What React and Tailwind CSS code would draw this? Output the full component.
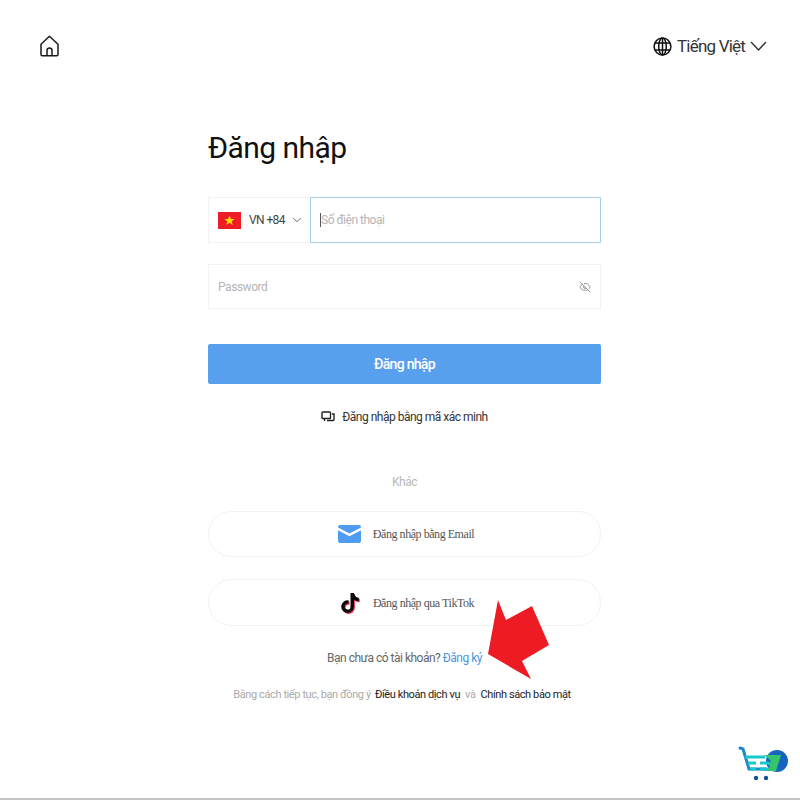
import React from 'react'
import { ChevronDown, EyeOff } from 'lucide-react'
import { FaTiktok } from 'react-icons/fa'

function HomeIcon() {
  return (
    <svg width="19" height="22" viewBox="0 0 19 22" fill="none" stroke="#1a1a1a" strokeWidth="1.5" strokeLinejoin="round" className="shrink-0">
      <path d="M9.5 1.2L1 9.2V19.5a1.3 1.3 0 0 0 1.3 1.3h14.4a1.3 1.3 0 0 0 1.3-1.3V9.2z" />
      <path d="M7 20.8v-5.3a2.5 2.5 0 0 1 5 0v5.3" />
    </svg>
  )
}

function GlobeIcon() {
  return (
    <svg width="19" height="19" viewBox="0 0 19 19" fill="none" stroke="#111" strokeWidth="1.5" className="shrink-0">
      <circle cx="9.5" cy="9.5" r="8.4" />
      <ellipse cx="9.5" cy="9.5" rx="3.8" ry="8.4" />
      <path d="M9.5 1v17M2 6h15M2 13h15" />
    </svg>
  )
}

function WideChevron() {
  return (
    <svg width="17" height="10" viewBox="0 0 17 10" fill="none" stroke="#333" strokeWidth="1.4" className="shrink-0">
      <path d="M1 1l7.5 8L16 1" />
    </svg>
  )
}

function VnFlag() {
  return (
    <svg width="23" height="17" viewBox="0 0 23 17" className="shrink-0">
      <rect width="23" height="17" fill="#ee1c25" />
      <polygon points="11.5,3.5 12.9,7 16.6,7 13.7,9.3 14.7,13 11.5,10.8 8.3,13 9.3,9.3 6.4,7 10.1,7" fill="#ffe000" />
    </svg>
  )
}

function CodeIcon() {
  return (
    <svg width="14" height="12" viewBox="0 0 14 12" fill="none" stroke="#222" strokeWidth="1.4" className="shrink-0">
      <rect x="1" y="1" width="8.5" height="6.5" rx="0.8" />
      <path d="M11 3h2v5.5a1 1 0 0 1-1 1H6" />
      <path d="M3.5 7.5v2.5" />
    </svg>
  )
}

function MailIcon() {
  return (
    <svg width="23" height="18" viewBox="0 0 23 18" className="shrink-0">
      <path d="M2 0h19a2 2 0 0 1 2 2v.6L11.5 8.6 0 2.6V2a2 2 0 0 1 2-2z" fill="#4d9cf0" />
      <path d="M0 5.2l11.5 6 11.5-6V16a2 2 0 0 1-2 2H2a2 2 0 0 1-2-2z" fill="#4d9cf0" />
    </svg>
  )
}

function CartLogo() {
  return (
    <svg width="50" height="36" viewBox="0 0 50 36" className="absolute left-[738px] top-[746px]">
      <circle cx="39" cy="15" r="11" fill="#1565c0" />
      <path d="M26 9h17l-5 16H26l6-4-2-3 3-3-3-3z" fill="#35c46b" />
      <path d="M2 2l3 1 6 20h17" fill="none" stroke="#1e88c9" strokeWidth="3" strokeLinecap="round" />
      <path d="M7 11h20M10 17h8M22 17h9M12 23h6M22 23h8" fill="none" stroke="#19c7d0" strokeWidth="3" />
      <circle cx="18" cy="32" r="2.2" fill="#14508f" />
      <circle cx="28" cy="32" r="2.2" fill="#14508f" />
    </svg>
  )
}

function RedArrow() {
  return (
    <svg width="64" height="82" viewBox="0 0 64 82" className="absolute left-[487px] top-[599px]">
      <polygon points="11,1 19,21 45,7 62,46 35,62 44,80 1,55" fill="#ed1c24" />
    </svg>
  )
}

export default function App() {
  return (
    <div className="relative w-[800px] h-[800px] overflow-hidden bg-white font-['Roboto',sans-serif] border-b-2 border-[#c4c4c4]">
      {/* Header */}
      <header className="flex items-start justify-between pt-[35px] pl-[40px] pr-[33px] h-[128px]">
        <HomeIcon />
        <div className="flex items-center text-[#333]">
          <GlobeIcon />
          <span className="ml-[5px] text-[17px] leading-[22px] tracking-[-0.8px]">Tiếng Việt</span>
          <span className="ml-[5px]"><WideChevron /></span>
        </div>
      </header>

      {/* Form */}
      <main className="ml-[208px] w-[393px] flex flex-col">
        <h1 className="text-[30px] leading-[40px] font-normal tracking-[-0.55px] text-[#111]">Đăng nhập</h1>

        <div className="mt-[29px] flex h-[46px]">
          <div className="w-[102px] flex items-center pl-[9px] border border-[#f2f2f2] border-r-0">
            <VnFlag />
            <span className="ml-[8px] text-[12px] tracking-[-0.6px] text-[#444]">VN +84</span>
            <ChevronDown size={14} strokeWidth={1.5} className="ml-[5px] text-[#555]" />
          </div>
          <div className="flex-1 flex items-center pl-[9px] border border-[#a5cdea] rounded-[1px]">
            <span className="w-px h-[14px] bg-[#555]"></span>
            <span className="text-[12px] tracking-[-0.5px] text-[#b5b5b5]">Số điện thoại</span>
          </div>
        </div>

        <div className="mt-[21px] h-[45px] flex items-center justify-between pl-[9px] pr-[9px] border border-[#f2f2f2]">
          <span className="text-[12px] tracking-[-0.45px] text-[#b5b5b5]">Password</span>
          <EyeOff size={12} className="text-[#999]" />
        </div>

        <button className="mt-[35px] h-[40px] bg-[#589fee] rounded-[2px] text-white text-[14px] font-medium tracking-[-0.7px]">Đăng nhập</button>

        <div className="mt-[23px] flex items-center justify-center gap-[7px] h-[20px] text-[12px] tracking-[-0.5px] text-[#333]">
          <CodeIcon />
          <span>Đăng nhập bằng mã xác minh</span>
        </div>

        <p className="mt-[47px] text-center text-[12px] leading-[16px] tracking-[-0.5px] text-[#b8b8b8]">Khác</p>

        <div className="mt-[21px] h-[46px] flex items-center justify-center gap-[12px] pl-[3px] border border-[#f2f2f2] rounded-full font-['Liberation_Serif',serif] text-[12px] tracking-[-0.45px] text-[#555]">
          <MailIcon />
          <span>Đăng nhập bằng Email</span>
        </div>

        <div className="mt-[22px] h-[47px] flex items-center justify-center gap-[13px] pl-[5px] border border-[#f2f2f2] rounded-full font-['Liberation_Serif',serif] text-[12px] tracking-[-0.45px] text-[#555]">
          <FaTiktok size={20} className="text-[#0a0a0a] drop-shadow-[1px_1px_0_#f0355c]" />
          <span>Đăng nhập qua TikTok</span>
        </div>

        <p className="mt-[24px] text-center text-[12px] leading-[16px] tracking-[-0.5px] text-[#666]">
          Bạn chưa có tài khoản? <span className="text-[#4d94e0]">Đăng ký</span>
        </p>

        <p className="mt-[21px] pr-[5px] text-center text-[11px] leading-[16px] tracking-[-0.4px] text-[#aaa] whitespace-nowrap">
          Bằng cách tiếp tục, bạn đồng ý <span className="ml-[2px] text-[#222]">Điều khoản dịch vụ</span>
          <span className="mx-[5px]">và</span>
          <span className="text-[#222]">Chính sách bảo mật</span>
        </p>
      </main>

      <RedArrow />
      <CartLogo />
    </div>
  )
}
